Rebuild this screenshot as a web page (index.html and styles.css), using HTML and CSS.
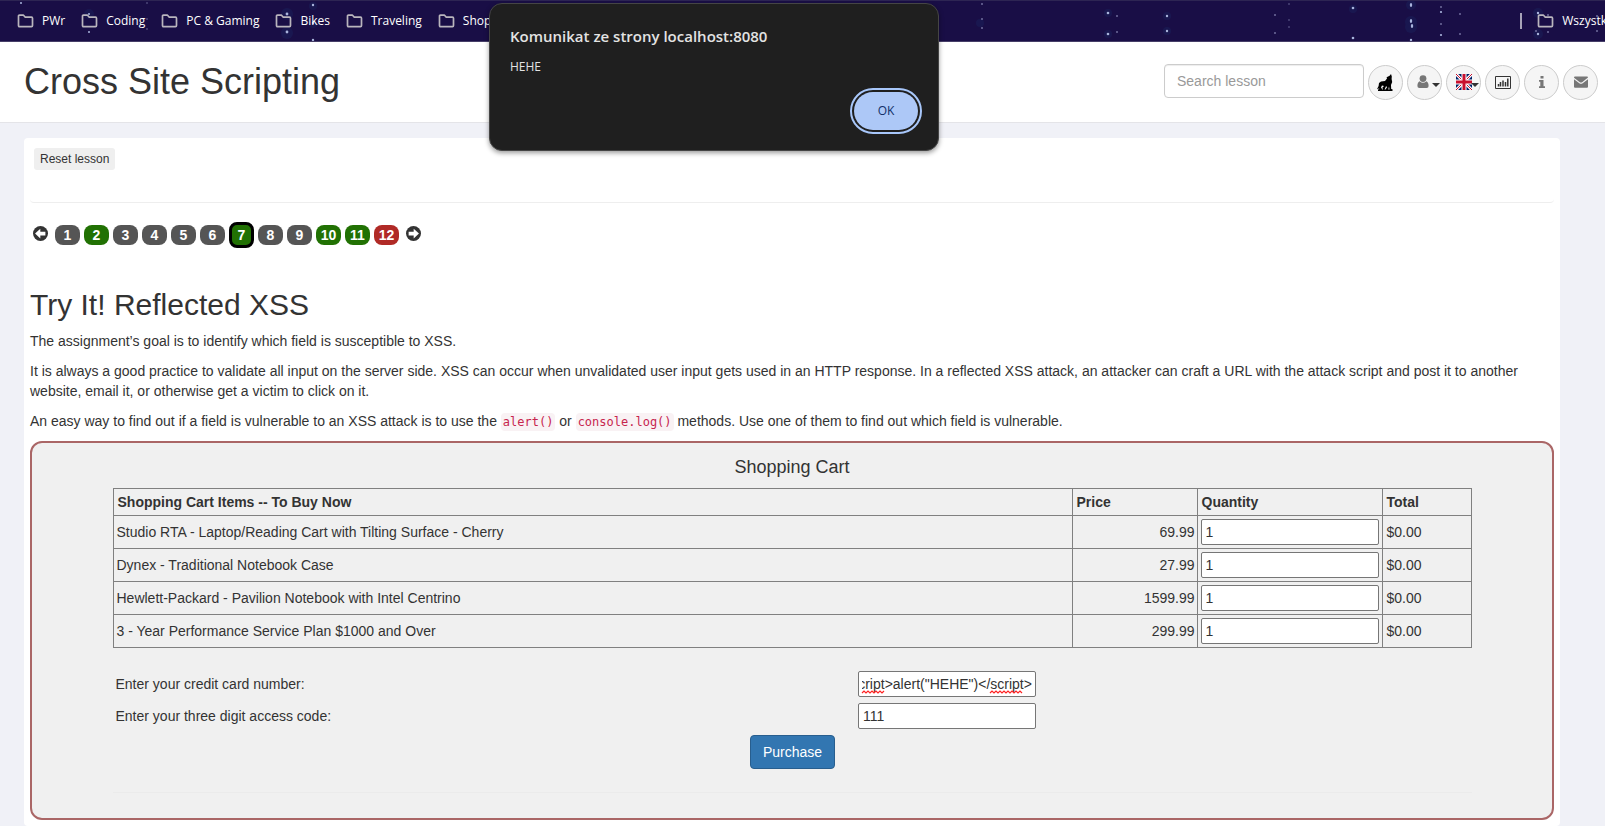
FILE: index.html
```html
<!DOCTYPE html>
<html lang="en">
<head>
<meta charset="utf-8">
<title>Cross Site Scripting</title>
<link rel="stylesheet" href="styles.css">
</head>
<body>
<svg class="defs" aria-hidden="true">
  <symbol id="folder" viewBox="0 0 16 14"><path d="M1 2.2Q1 1.2 2 1.2H6L7.8 3.2H14Q15 3.2 15 4.2V11.6Q15 12.6 14 12.6H2Q1 12.6 1 11.6Z" fill="none" stroke="#b9b5bd" stroke-width="1.7" stroke-linejoin="round"/></symbol>
  <symbol id="arrow" viewBox="0 0 16 16"><circle cx="8" cy="8" r="8" fill="#333"/><path d="M2.2 8 7.8 2.8V6H13.2V10H7.8V13.2Z" fill="#fff"/></symbol>
</svg>

<nav class="bookmarks" aria-label="Bookmarks">
  <svg class="stars" aria-hidden="true">
    <g fill="#1d4a86" opacity=".16">
      <circle cx="89" cy="13" r="5"/><circle cx="287" cy="13" r="6"/><circle cx="287" cy="32" r="6"/><circle cx="313" cy="5" r="4"/><circle cx="313" cy="23" r="4"/>
      <circle cx="1108" cy="12" r="4"/><circle cx="1108" cy="33" r="4"/><circle cx="1167" cy="15" r="4"/><circle cx="1167" cy="30" r="4"/><circle cx="1353" cy="8" r="4"/><circle cx="1411" cy="4" r="5"/><circle cx="1411" cy="21" r="6"/><circle cx="1411" cy="26" r="6"/><circle cx="1538" cy="12" r="5"/><circle cx="1538" cy="33" r="5"/><circle cx="980" cy="22" r="4"/>
    </g>
    <g fill="#a9b4dc">
      <circle cx="287" cy="13" r="1.4"/><circle cx="287" cy="31" r="1.4"/><circle cx="313" cy="4" r="1.2"/><circle cx="313" cy="22" r="1.2"/><circle cx="313" cy="39" r="1.2"/><circle cx="89" cy="13" r="1"/><circle cx="89" cy="31" r="1"/><circle cx="21" cy="2" r="1"/>
      <circle cx="1108" cy="12" r="1.3"/><circle cx="1108" cy="33" r="1.3"/><circle cx="1167" cy="15" r="1.2"/><circle cx="1167" cy="30" r="1.2"/><circle cx="1353" cy="7" r="1.3"/><circle cx="1353" cy="37" r="1.3"/>
      <ellipse cx="1411" cy="4" rx="1.2" ry="2"/><ellipse cx="1411" cy="20" rx="1.2" ry="2"/><ellipse cx="1412" cy="25" rx="1.2" ry="2"/><circle cx="1411" cy="39" r="1.2"/><circle cx="1441" cy="11" r="1.1"/><circle cx="1441" cy="34" r="1.1"/><circle cx="1538" cy="12" r="1.2"/><circle cx="1538" cy="33" r="1.2"/>
    </g>
    <g fill="#6f6d9c">
      <circle cx="147" cy="2" r=".8"/><circle cx="147" cy="18" r=".8"/><circle cx="147" cy="28" r=".8"/><circle cx="982" cy="3" r="1"/><circle cx="982" cy="18" r="1"/><circle cx="982" cy="27" r="1"/><circle cx="1117" cy="15" r="1"/><circle cx="1117" cy="31" r="1"/><circle cx="1275" cy="14" r="1"/><circle cx="1275" cy="32" r="1"/><circle cx="1289" cy="3" r=".8"/><circle cx="1289" cy="19" r=".8"/><circle cx="1289" cy="26" r=".8"/><circle cx="1441" cy="6" r="1"/><circle cx="1441" cy="23" r="1"/><circle cx="1460" cy="13" r="1"/><circle cx="1460" cy="33" r="1"/><circle cx="1548" cy="14" r="1"/><circle cx="1548" cy="31" r="1"/><circle cx="1536" cy="30" r="1"/><circle cx="1597" cy="15" r="1"/><circle cx="1597" cy="30" r="1"/>
    </g>
  </svg>
  <a class="bookmark" href="#"><svg><use href="#folder"/></svg>PWr</a>
  <a class="bookmark" href="#"><svg><use href="#folder"/></svg>Coding</a>
  <a class="bookmark" href="#"><svg><use href="#folder"/></svg>PC &amp; Gaming</a>
  <a class="bookmark" href="#"><svg><use href="#folder"/></svg>Bikes</a>
  <a class="bookmark" href="#"><svg><use href="#folder"/></svg>Traveling</a>
  <a class="bookmark" href="#"><svg><use href="#folder"/></svg>Shop</a>
  <a class="bookmark bookmark-all" href="#"><svg><use href="#folder"/></svg>Wszystk</a>
</nav>

<header class="header">
  <h1>Cross Site Scripting</h1>
  <div class="tools">
    <input class="search" type="text" placeholder="Search lesson" aria-label="Search lesson">
    <button class="tool" aria-label="WebWolf">
      <svg width="17" height="17" viewBox="0 0 17 17"><path d="M14 0 14.800 2.500 14.600 5 15.200 8 14 11 14.200 15 15.500 15.300V17H1V15.600L2.500 15 1.800 14.500 0 15.200 1.600 12 2 9 4 7.400 8 7 10 4.500 9.600 3.200 12.600 1.800ZM5 11.500 4 13.500 5.400 15.500H6L5.300 13.800 7 12ZM9 12.200 7.600 15.500H8.500L10.200 13ZM12 12.500 11.300 15.500H12.500Z" fill="#000" fill-rule="evenodd"/></svg>
    </button>
    <button class="tool" aria-label="User menu">
      <svg width="12" height="14" viewBox="0 0 12 14"><circle cx="6" cy="3.600" r="3.400" fill="#777"/><path d="M2.600 6.200Q6 9.400 9.400 6.200Q11.600 7.200 11.600 11Q11.600 13 9.600 13H2.400Q.4 13 .4 11Q.4 7.200 2.600 6.200Z" fill="#777"/></svg>
      <span class="caret"></span>
    </button>
    <button class="tool" aria-label="Language">
      <svg width="16" height="16" viewBox="0 0 16 16"><path d="M0 0H16V16H0Z" fill="#012169"/><path d="M0 0 16 16M16 0 0 16" stroke="#fff" stroke-width="3"/><path d="M0 0 16 16M16 0 0 16" stroke="#c8102e" stroke-width="1"/><path d="M8 0V16M0 8H16" stroke="#fff" stroke-width="5"/><path d="M8 0V16M0 8H16" stroke="#c8102e" stroke-width="3"/></svg>
      <span class="caret"></span>
    </button>
    <button class="tool" aria-label="Report card">
      <svg width="16" height="13" viewBox="0 0 16 13"><path d="M.5.5H15.500V12.500H.5Z" fill="none" stroke="#333"/><path d="M3.500 8V10.500M5.500 6V10.500M8 4.500V10.500M10.500 6V10.500M12.800 2.500V10.500" stroke="#333" stroke-width="1.500"/></svg>
    </button>
    <button class="tool" aria-label="About">
      <svg width="6" height="12" viewBox="0 0 6 12"><path d="M1.500 0H4.500V2.600H1.500ZM0 4H4.500V10.200H6V12H0V10.200H1.300V5.800H0Z" fill="#777"/></svg>
    </button>
    <button class="tool" aria-label="Contact">
      <svg width="14" height="12" viewBox="0 0 14 12"><path d="M1 .5H13Q14 .5 14 1.600L8.200 6.200Q7 7 5.800 6.200L0 1.800Q0 .5 1 .5ZM0 3.300 5.300 7.200Q7 8.200 8.700 7.200L14 3.200V10.800Q14 11.800 13 11.800H1Q0 11.800 0 10.800Z" fill="#777"/></svg>
    </button>
  </div>
</header>

<main class="panel">
  <div class="lesson-bar"><button class="reset">Reset lesson</button></div>

  <nav class="pager" aria-label="Lesson pages">
    <a class="step" href="#" aria-label="Previous"><svg><use href="#arrow"/></svg></a>
    <a class="page" href="#">1</a>
    <a class="page solved" href="#">2</a>
    <a class="page" href="#">3</a>
    <a class="page" href="#">4</a>
    <a class="page" href="#">5</a>
    <a class="page" href="#">6</a>
    <a class="page solved current" href="#">7</a>
    <a class="page" href="#">8</a>
    <a class="page" href="#">9</a>
    <a class="page solved" href="#">10</a>
    <a class="page solved" href="#">11</a>
    <a class="page open" href="#">12</a>
    <a class="step next" href="#" aria-label="Next"><svg><use href="#arrow"/></svg></a>
  </nav>

  <h2>Try It! Reflected XSS</h2>
  <p>The assignment’s goal is to identify which field is susceptible to XSS.</p>
  <p>It is always a good practice to validate all input on the server side. XSS can occur when unvalidated user input gets used in an HTTP response. In a reflected XSS attack, an attacker can craft a URL with the attack script and post it to another website, email it, or otherwise get a victim to click on it.</p>
  <p>An easy way to find out if a field is vulnerable to an XSS attack is to use the <code>alert()</code> or <code>console.log()</code> methods. Use one of them to find out which field is vulnerable.</p>

  <section class="attack">
    <h4>Shopping Cart</h4>
    <table class="cart">
      <colgroup><col><col class="col-price"><col class="col-quantity"><col class="col-total"></colgroup>
      <thead><tr><th>Shopping Cart Items -- To Buy Now</th><th>Price</th><th>Quantity</th><th>Total</th></tr></thead>
      <tbody>
        <tr><td>Studio RTA - Laptop/Reading Cart with Tilting Surface - Cherry</td><td class="price">69.99</td><td><input class="field" type="text" value="1" aria-label="Quantity, Studio RTA"></td><td>$0.00</td></tr>
        <tr><td>Dynex - Traditional Notebook Case</td><td class="price">27.99</td><td><input class="field" type="text" value="1" aria-label="Quantity, Dynex"></td><td>$0.00</td></tr>
        <tr><td>Hewlett-Packard - Pavilion Notebook with Intel Centrino</td><td class="price">1599.99</td><td><input class="field" type="text" value="1" aria-label="Quantity, Hewlett-Packard"></td><td>$0.00</td></tr>
        <tr><td>3 - Year Performance Service Plan $1000 and Over</td><td class="price">299.99</td><td><input class="field" type="text" value="1" aria-label="Quantity, Service Plan"></td><td>$0.00</td></tr>
      </tbody>
    </table>
    <form class="payment">
      <label for="card">Enter your credit card number:</label>
      <div class="card-field">
        <input class="field" id="card" type="text" spellcheck="false" value="&lt;script&gt;alert(&quot;HEHE&quot;)&lt;/script&gt;">
        <svg class="spelling" viewBox="0 0 178 26" aria-hidden="true"><path d="M4 22l2-2 2 2 2-2 2 2 2-2 2 2 2-2 2 2 2-2 2 2 2-2M132 22l2-2 2 2 2-2 2 2 2-2 2 2 2-2 2 2 2-2 2 2 2-2 2 2 2-2 2 2 2-2 2 2" fill="none" stroke="#f22" stroke-width="1.200"/></svg>
      </div>
      <label for="code">Enter your three digit access code:</label>
      <div><input class="field" id="code" type="text" value="111"></div>
      <button class="purchase" type="button">Purchase</button>
    </form>
    <hr>
  </section>
</main>

<div class="dialog" role="alertdialog" aria-labelledby="dialog-title" aria-describedby="dialog-text">
  <h3 id="dialog-title">Komunikat ze strony localhost:8080</h3>
  <p id="dialog-text">HEHE</p>
  <button class="ok">OK</button>
</div>
<script src="main.js"></script>
</body>
</html>
```

FILE: main.js
```js
// Keep the end of a long card value in view.
const card = document.getElementById('card');
card.scrollLeft = card.scrollWidth;
```

FILE: styles.css
```css
* { box-sizing: border-box; }

body {
  margin: 0;
  background: #f0f1f7;
  color: #333;
  font: 14px/20px "Liberation Sans", Arial, sans-serif;
}

h1, h2, h3, h4, p { margin: 0; font-weight: normal; }
button, input { font: inherit; color: inherit; }
a { color: inherit; text-decoration: none; }
.defs { position: absolute; width: 0; height: 0; }

/* Bookmarks bar */
.bookmarks {
  position: relative;
  display: flex;
  align-items: center;
  gap: 16px;
  height: 42px;
  padding-left: 17px;
  overflow: hidden;
  background: #190e46;
  border-top: 1px solid #2d2553;
  border-bottom: 1px solid #463e68;
  color: #fff;
  font: 12px/16px "Open Sans", "Noto Sans", sans-serif;
}
.stars { position: absolute; inset: 0; width: 100%; height: 100%; }
.bookmark {
  position: relative;
  display: flex;
  align-items: center;
  gap: 8px;
  white-space: nowrap;
}
.bookmark svg { width: 17px; height: 14px; }
.bookmark-all {
  margin-left: auto;
  margin-right: -2px;
  padding-left: 15px;
  border-left: 2px solid #a7a3b8;
}

/* Page header */
.header {
  display: flex;
  align-items: center;
  justify-content: space-between;
  min-height: 81px;
  padding: 0 7px 0 24px;
  background: #fff;
  border-bottom: 1px solid #e4e4e8;
}
h1 { font-size: 36px; line-height: 40px; }
.tools { display: flex; align-items: center; gap: 4px; }
.search {
  width: 200px;
  height: 34px;
  margin-bottom: 2px;
  padding: 6px 12px;
  border: 1px solid #ccc;
  border-radius: 4px;
  box-shadow: inset 0 1px 1px rgba(0, 0, 0, .075);
}
.search::placeholder { color: #999; }
.tool {
  display: flex;
  align-items: center;
  justify-content: center;
  position: relative;
  width: 35px;
  height: 35px;
  padding: 0;
  border: 1px solid #ccc;
  border-radius: 50%;
  background: #f5f5f5;
}
.tool svg { flex: none; }
.caret {
  position: absolute;
  right: 1px;
  top: 17px;
  border: 4px solid transparent;
  border-top-color: #333;
  border-bottom: 0;
}
.tool:has(.caret) { padding-right: 4px; }
.tool[aria-label="Language"] { padding-right: 0; }

/* Lesson panel */
.panel {
  margin: 15px 45px 0 24px;
  padding: 0 6px 6px;
  background: #fff;
  border-radius: 4px;
}
.lesson-bar {
  padding: 10px 4px 32px;
  border-bottom: 1px solid #eee;
  border-radius: 4px;
}
.reset {
  display: block;
  height: 22px;
  padding: 0 6px;
  border: 0;
  border-radius: 3px;
  background: #efefef;
  font-size: 12px;
  line-height: 22px;
}

.pager {
  display: flex;
  align-items: center;
  gap: 4px;
  height: 26px;
  margin: 19px 0 40px 3px;
}
.step { display: flex; height: 18px; margin-right: 3px; }
.step svg { width: 15px; height: 15px; }
.next { margin: 0 0 0 3px; transform: scaleX(-1); }
.page {
  width: 25px;
  height: 20px;
  border-radius: 8px;
  background: #555;
  color: #fff;
  font-weight: bold;
  text-align: center;
}
.solved { background: #217103; }
.open { background: #b02a26; }
.current {
  height: 26px;
  border: 3px solid #000;
}

h2 { margin-bottom: 10px; font-size: 30px; line-height: 33px; }
.panel > p { margin-bottom: 10px; }
code {
  padding: 2px;
  border-radius: 4px;
  background: #f9f2f4;
  color: #c7254e;
  font: 12px "DejaVu Sans Mono", monospace;
}

/* Assignment box */
.attack {
  padding: 5px;
  border: 2px solid #a66;
  border-radius: 12px;
  background: #f0f0f0;
}
h4 { margin: 9px 0 11px; font-size: 18px; text-align: center; }
.cart {
  width: 90%;
  margin: 0 auto;
  border-collapse: collapse;
  table-layout: fixed;
}
.cart th, .cart td {
  padding: 3px;
  border: 1px solid #808080;
  text-align: left;
}
.cart th { padding-left: 4px; }
.cart .price { padding-right: 2px; text-align: right; }
.cart td:last-child { padding-left: 4px; }
.col-price { width: 125px; }
.col-quantity { width: 185px; }
.col-total { width: 89px; }
.field {
  display: block;
  width: 178px;
  height: 26px;
  padding: 1px 4px;
  border: 1px solid #767676;
  border-radius: 2px;
  background: #fff;
}
#card { padding: 1px 3px; }
.payment {
  display: grid;
  grid-template-columns: 17fr 14fr;
  align-items: center;
  gap: 6px 0;
  width: 90%;
  margin: 23px auto;
  padding: 0 2px 0 3px;
}
.card-field { position: relative; }
.spelling {
  position: absolute;
  left: 0;
  top: 0;
  width: 178px;
  height: 26px;
  pointer-events: none;
}
.purchase {
  grid-column: 1 / -1;
  justify-self: center;
  padding: 6px 12px;
  border: 1px solid #285e8e;
  border-radius: 4px;
  background: #3276b1;
  color: #fff;
}
hr {
  width: 90%;
  margin: 0 auto 20px;
  border: 0;
  border-top: 1px solid #ebebeb;
}

/* Browser alert */
.dialog {
  position: absolute;
  top: 3px;
  left: 489px;
  display: flex;
  flex-direction: column;
  width: 450px;
  padding: 22px 20px 20px;
  border: 1px solid #454545;
  border-radius: 13px;
  background: #1f1f1f;
  color: #e3e3e3;
  font: 12px/18px "Open Sans", "Noto Sans", sans-serif;
  box-shadow: 0 2px 5px rgba(0, 0, 0, .4);
}
.dialog h3 {
  margin-bottom: 12px;
  font-size: 15px;
  line-height: 20px;
  font-weight: 600;
}
.ok {
  align-self: flex-end;
  width: 64px;
  height: 38px;
  margin-top: 16px;
  padding: 0;
  border: 0;
  border-radius: 19px;
  outline: 2px solid #a8c7fa;
  outline-offset: 2px;
  background: #adc8f7;
  color: #123068;
}
```
